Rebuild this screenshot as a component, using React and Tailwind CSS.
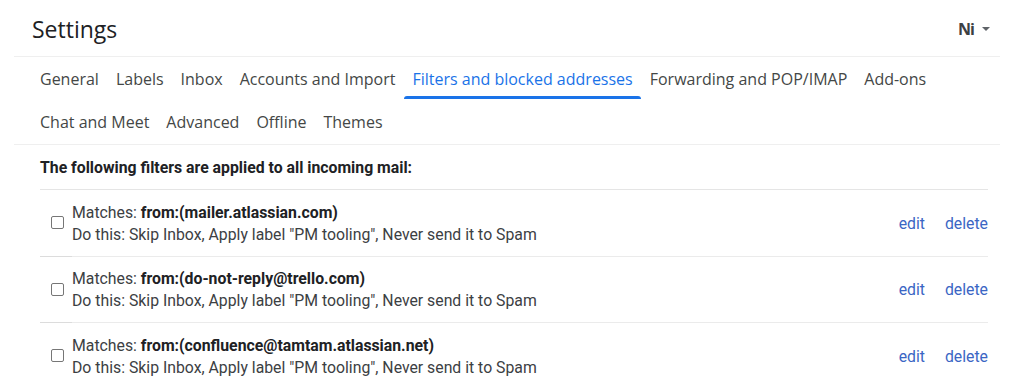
import React from "react";

const tabs1 = ["General", "Labels", "Inbox", "Accounts and Import", "Filters and blocked addresses", "Forwarding and POP/IMAP", "Add-ons"];
const tabs2 = ["Chat and Meet", "Advanced", "Offline", "Themes"];
const filters = ["mailer.atlassian.com", "do-not-reply@trello.com", "confluence@tamtam.atlassian.net"];

function Tab({ label, active }) {
  return (
    <div className="relative h-full flex items-center px-[8.5px]">
      <span className={active ? "text-[#1a73e8]" : "text-[#444746]"}>{label}</span>
      {active && <div className="absolute left-0 right-0 bottom-[1px] h-[3px] bg-[#1a73e8] rounded-t-sm" />}
    </div>
  );
}

export default function App() {
  return (
    <div className="w-[1024px] h-[387px] bg-white overflow-hidden" style={{ fontFamily: "Roboto, Arial, sans-serif" }}>
      <div className="ml-[14px] w-[986px]">
        <div className="h-[57px] flex items-center justify-between border-b border-[#efefef] pl-[18px] pr-[10px]">
          <div className="text-[23px] text-[#202124] pt-[3px]" style={{ fontFamily: "'Open Sans', sans-serif" }}>Settings</div>
          <div className="flex items-center gap-[8px] pt-[2px]">
            <span className="text-[16px] font-bold text-[#3c4043] tracking-[-1px]" style={{ fontFamily: "'Open Sans', sans-serif" }}>Ni</span>
            <svg width="8" height="4" viewBox="0 0 8 4"><path d="M0 0h8L4 4z" fill="#5f6368" /></svg>
          </div>
        </div>
        <div className="pl-[17.5px] border-b border-[#efefef] text-[16px]" style={{ fontFamily: "'Open Sans', sans-serif" }}>
          <div className="h-[44px] flex pb-[1px]">
            {tabs1.map((t) => <Tab key={t} label={t} active={t === "Filters and blocked addresses"} />)}
          </div>
          <div className="h-[43px] flex pb-[1px]">
            {tabs2.map((t) => <Tab key={t} label={t} />)}
          </div>
        </div>
      </div>
      <div className="ml-[40px] w-[948px] text-[15.8px] text-[#202124]">
        <div className="h-[45px] flex items-center font-bold border-b border-[#e5e5e5] pt-[1px]">The following filters are applied to all incoming mail:</div>
        {filters.map((f, i) => (
          <div key={f} className="relative h-[66.5px] flex items-center border-b border-[#ebebeb]">
            <div className="w-[32px] flex justify-center pl-[2px]">
              <div className="w-[13px] h-[13px] border border-[#767676] rounded-[2px] bg-white" />
            </div>
            <div className="flex-1 leading-[22px] pt-[2px]">
              <div className="text-[#3c4043]">Matches: <span className="font-bold text-[#202124]">from:({f})</span></div>
              <div className="text-[#3c4043]">Do this: Skip Inbox, Apply label "PM tooling", Never send it to Spam</div>
            </div>
            <div className="flex gap-[20px] text-[#3b66c4] pt-[2px]">
              <span>edit</span>
              <span>delete</span>
            </div>
            {i < 2 && <div className="absolute left-0 bottom-[-1px] w-[32px] h-[1px] bg-[#dcdcdc]" />}
          </div>
        ))}
      </div>
    </div>
  );
}
